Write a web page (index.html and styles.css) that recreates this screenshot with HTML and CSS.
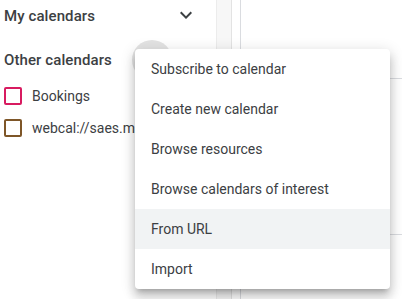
FILE: index.html
```html
<!DOCTYPE html>
<html lang="en">
<head>
  <meta charset="UTF-8" />
  <title>Calendar</title>
  <link rel="stylesheet" href="styles.css">
</head>
<body>
  <div class="page">
    <aside class="sidebar">
      <div class="section-head">
        <span class="section-title">My calendars</span>
        <svg class="chevron" width="24" height="24" viewBox="0 0 24 24">
          <path d="M7.41 8.59L12 13.17l4.59-4.58L18 10l-6 6-6-6z" fill="#3c4043"/>
        </svg>
      </div>

      <div class="section-head other">
        <span class="section-title">Other calendars</span>
        <span class="add-btn"></span>
      </div>
      <div class="cal-row">
        <span class="check pink"></span>
        <span class="cal-name">Bookings</span>
      </div>
      <div class="cal-row">
        <span class="check brown"></span>
        <span class="cal-name">webcal://saes.mit.edu</span>
      </div>
    </aside>
    <div class="scroll-track"></div>
    <main class="grid">
      <div class="grid-row first"></div>
      <div class="grid-row"></div>
    </main>
  </div>

  <ul class="menu">
    <li>Subscribe to calendar</li>
    <li>Create new calendar</li>
    <li>Browse resources</li>
    <li>Browse calendars of interest</li>
    <li class="active">From URL</li>
    <li>Import</li>
  </ul>
</body>
</html>
```

FILE: styles.css
```css
body {
  margin: 0;
  font-family: Roboto, "Liberation Sans", sans-serif;
  font-size: 14px;
  color: #3c4043;
  background: #fff;
}
.page {
  display: flex;
  height: 299px;
  overflow: hidden;
}
.sidebar {
  width: 216px;
  flex-shrink: 0;
  padding-left: 4px;
  box-sizing: border-box;
  overflow: hidden;
}
.section-head {
  display: flex;
  align-items: center;
  height: 32px;
}
.section-title {
  font-size: 15px;
  font-weight: 500;
  letter-spacing: 0.1px;
  white-space: nowrap;
}
.chevron {
  margin-left: auto;
  margin-right: 18px;
  margin-top: -2px;
}
.section-head.other {
  height: 40px;
  margin-top: 8px;
  gap: 20px;
}
.add-btn {
  width: 40px;
  height: 40px;
  border-radius: 50%;
  background: #e3e3e3;
}
.cal-row {
  display: flex;
  align-items: center;
  height: 32px;
  gap: 10px;
  white-space: nowrap;
}
.check {
  width: 14px;
  height: 14px;
  border: 2px solid;
  border-radius: 2px;
  flex-shrink: 0;
}
.check.pink { border-color: #d81b60; }
.check.brown { border-color: #7e5628; }
.scroll-track {
  width: 14px;
  flex-shrink: 0;
  background: #f7f7f7;
  border-left: 1px solid #ececec;
  border-right: 1px solid #e3e3e3;
}
.grid {
  flex: 1;
  margin-left: 8px;
  border-left: 1px solid #dadce0;
}
.grid-row {
  height: 155px;
  border-bottom: 1px solid #dadce0;
}
.grid-row.first {
  height: 78px;
}
.menu {
  position: absolute;
  left: 135px;
  top: 49px;
  width: 255px;
  margin: 0;
  padding: 0;
  list-style: none;
  background: #fff;
  border-radius: 4px;
  box-shadow: 0 5px 5px -3px rgba(0,0,0,.2), 0 8px 10px 1px rgba(0,0,0,.14), 0 3px 14px 2px rgba(0,0,0,.12);
}
.menu li {
  height: 40px;
  line-height: 40px;
  padding-left: 16px;
  white-space: nowrap;
}
.menu li.active {
  background: #f1f3f4;
}
```
